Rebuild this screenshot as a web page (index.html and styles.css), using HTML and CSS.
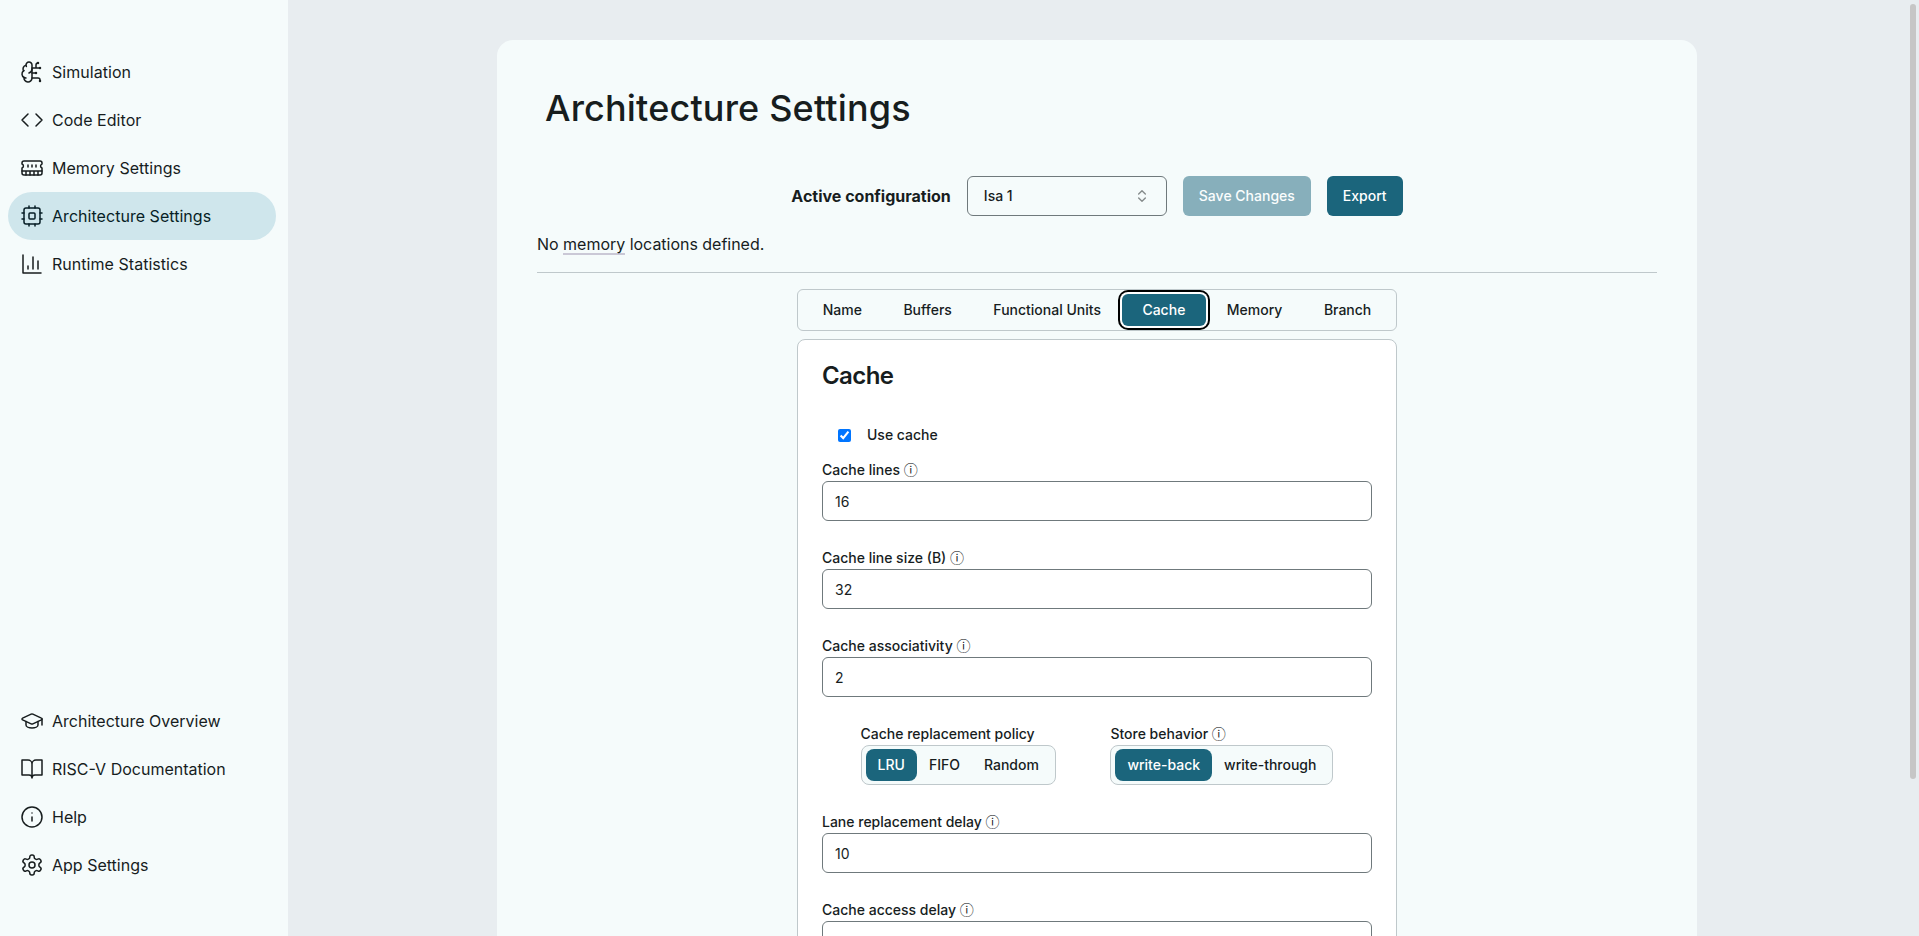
FILE: index.html
```html
<!DOCTYPE html>
<html lang="en">
<head>
<meta charset="utf-8">
<title>Architecture Settings</title>
<link rel="stylesheet" href="styles.css">
</head>
<body>
<div class="app">
  <nav class="sidebar">
    <div class="nav-group">
      <a class="nav-item"><svg class="icon" viewBox="0 0 24 24"><path d="M12 5a3 3 0 1 0-5.997.125 4 4 0 0 0-2.526 5.77 4 4 0 0 0 .556 6.588A4 4 0 1 0 12 18Z"/><path d="M9 13a4.5 4.5 0 0 0 3-4M6.003 5.125A3 3 0 0 0 6.401 6.5M3.477 10.896a4 4 0 0 1 .585-.396M6 18a4 4 0 0 1-1.967-.516M12 13h4M12 18h6a2 2 0 0 1 2 2v1M12 8h8M16 8V5a2 2 0 0 1 2-2"/><circle cx="16" cy="13" r=".5"/><circle cx="18" cy="3" r=".5"/><circle cx="20" cy="21" r=".5"/><circle cx="20" cy="8" r=".5"/></svg>Simulation</a>
      <a class="nav-item"><svg class="icon" viewBox="0 0 24 24"><path d="m16 18 6-6-6-6M8 6l-6 6 6 6"/></svg>Code Editor</a>
      <a class="nav-item"><svg class="icon" viewBox="0 0 24 24"><path d="M6 19v-3M10 19v-3M14 19v-3M18 19v-3M8 11V9M16 11V9M12 11V9M2 15h20"/><path d="M2 7a2 2 0 0 1 2-2h16a2 2 0 0 1 2 2v1.1a2 2 0 0 0 0 3.837V17a2 2 0 0 1-2 2H4a2 2 0 0 1-2-2v-5.1a2 2 0 0 0 0-3.837Z"/></svg>Memory Settings</a>
      <a class="nav-item active"><svg class="icon" viewBox="0 0 24 24"><rect x="4" y="4" width="16" height="16" rx="2"/><rect x="9" y="9" width="6" height="6" rx="1"/><path d="M15 2v2M15 20v2M2 15h2M2 9h2M20 15h2M20 9h2M9 2v2M9 20v2"/></svg>Architecture Settings</a>
      <a class="nav-item"><svg class="icon" viewBox="0 0 24 24"><path d="M3 3v18h18M13 17V5M18 17V9M8 17v-3"/></svg>Runtime Statistics</a>
    </div>
    <div class="nav-group secondary">
      <a class="nav-item"><svg class="icon" viewBox="0 0 24 24"><path d="M21.42 10.922a1 1 0 0 0-.019-1.838L12.83 5.18a2 2 0 0 0-1.66 0L2.6 9.08a1 1 0 0 0 0 1.832l8.57 3.908a2 2 0 0 0 1.66 0z"/><path d="M22 10v6M6 12.5V16a6 3 0 0 0 12 0v-3.5"/></svg>Architecture Overview</a>
      <a class="nav-item"><svg class="icon" viewBox="0 0 24 24"><path d="M2 3h6a4 4 0 0 1 4 4v14a3 3 0 0 0-3-3H2zM22 3h-6a4 4 0 0 0-4 4v14a3 3 0 0 1 3-3h7z"/></svg>RISC-V Documentation</a>
      <a class="nav-item"><svg class="icon" viewBox="0 0 24 24"><circle cx="12" cy="12" r="10"/><path d="M12 16v-4M12 8h.01"/></svg>Help</a>
      <a class="nav-item"><svg class="icon" viewBox="0 0 24 24"><path d="M12.22 2h-.44a2 2 0 0 0-2 2v.18a2 2 0 0 1-1 1.73l-.43.25a2 2 0 0 1-2 0l-.15-.08a2 2 0 0 0-2.73.73l-.22.38a2 2 0 0 0 .73 2.73l.15.1a2 2 0 0 1 1 1.72v.51a2 2 0 0 1-1 1.74l-.15.09a2 2 0 0 0-.73 2.73l.22.38a2 2 0 0 0 2.73.73l.15-.08a2 2 0 0 1 2 0l.43.25a2 2 0 0 1 1 1.73V20a2 2 0 0 0 2 2h.44a2 2 0 0 0 2-2v-.18a2 2 0 0 1 1-1.73l.43-.25a2 2 0 0 1 2 0l.15.08a2 2 0 0 0 2.73-.73l.22-.39a2 2 0 0 0-.73-2.73l-.15-.08a2 2 0 0 1-1-1.74v-.5a2 2 0 0 1 1-1.74l.15-.09a2 2 0 0 0 .73-2.73l-.22-.38a2 2 0 0 0-2.73-.73l-.15.08a2 2 0 0 1-2 0l-.43-.25a2 2 0 0 1-1-1.73V4a2 2 0 0 0-2-2z"/><circle cx="12" cy="12" r="3"/></svg>App Settings</a>
    </div>
  </nav>
  <main class="main">
    <div class="scroll-thumb"></div>
    <section class="page">
      <h1 class="page-title">Architecture Settings</h1>
      <div class="config-row">
        <span class="config-label">Active configuration</span>
        <button class="select">Isa 1<svg class="chevrons" viewBox="0 0 24 24"><path d="m7 15 5 5 5-5M7 9l5-5 5 5"/></svg></button>
        <button class="btn" disabled>Save Changes</button>
        <button class="btn">Export</button>
      </div>
      <p class="notice">No <span class="term">memory</span> locations defined.</p>
      <hr class="divider">
      <div class="tabs">
        <button class="tab">Name</button>
        <button class="tab">Buffers</button>
        <button class="tab">Functional Units</button>
        <button class="tab selected focused">Cache</button>
        <button class="tab">Memory</button>
        <button class="tab">Branch</button>
      </div>
      <div class="panel">
        <h2 class="panel-title">Cache</h2>
        <label class="check-row"><input class="check" type="checkbox" checked>Use cache</label>
        <div class="field"><label class="label">Cache lines <span class="hint">ⓘ</span></label><input class="input" value="16"></div>
        <div class="field"><label class="label">Cache line size (B) <span class="hint">ⓘ</span></label><input class="input" value="32"></div>
        <div class="field"><label class="label">Cache associativity <span class="hint">ⓘ</span></label><input class="input" value="2"></div>
        <div class="choices">
          <div class="choice"><span class="label">Cache replacement policy</span>
            <div class="segment"><button class="option selected">LRU</button><button class="option">FIFO</button><button class="option">Random</button></div></div>
          <div class="choice"><span class="label">Store behavior <span class="hint">ⓘ</span></span>
            <div class="segment"><button class="option selected">write-back</button><button class="option">write-through</button></div></div>
        </div>
        <div class="field"><label class="label">Lane replacement delay <span class="hint">ⓘ</span></label><input class="input" value="10"></div>
        <div class="field"><label class="label">Cache access delay <span class="hint">ⓘ</span></label><input class="input" value="1"></div>
      </div>
    </section>
  </main>
</div>
</body>
</html>
```
FILE: styles.css
```css
* { box-sizing: border-box; }
body { margin: 0; font-family: Inter, sans-serif; font-size: 16px; line-height: 24px; color: #171d1e; }
button, input { font: inherit; color: inherit; margin: 0; }
h1, h2, p { margin: 0; }

.app { display: flex; height: 936px; overflow: hidden; background: #e8edf0; }
.sidebar { width: 288px; flex: none; padding: 48px 12px 47px 8px; background: #f5fbfb; display: flex; flex-direction: column; justify-content: space-between; }
.nav-item { display: flex; align-items: center; gap: 8px; height: 48px; padding-left: 12px; border-radius: 24px; letter-spacing: 0.04px; }
.secondary .nav-item { letter-spacing: 0; }
.nav-item.active { background: #cfe6ec; color: #071e26; }
.icon { width: 24px; height: 24px; fill: none; stroke: currentColor; stroke-width: 1.5; stroke-linecap: round; stroke-linejoin: round; }

.main { position: relative; flex: 1; min-width: 0; padding: 40px 13px 0 0; overflow: hidden; }
.scroll-thumb { position: absolute; top: 4px; right: 3px; width: 6px; height: 775px; border-radius: 3px; background: #c6c6c6; }
.page { width: 1200px; height: 1100px; margin: 0 auto; padding: 40px; border-radius: 16px; background: #f5fbfb; }
.page-title { padding: 8px 8px; margin-bottom: 40px; font-size: 36px; line-height: 40px; font-weight: 500; letter-spacing: 0.17px; }

.config-row { display: flex; justify-content: center; align-items: center; gap: 16px; }
.config-label { font-weight: 700; }
.select { display: flex; justify-content: space-between; align-items: center; width: 200px; height: 40px; padding: 0 16px; border: 1px solid #6f797c; border-radius: 6px; background: transparent; font-size: 14px; font-weight: 500; }
.chevrons { width: 16px; height: 16px; fill: none; stroke: currentColor; stroke-width: 2; stroke-linecap: round; stroke-linejoin: round; opacity: .5; }
.btn { height: 40px; padding: 0 16px; border: 0; border-radius: 6px; background: #1b657c; color: #fff; font-size: 14px; font-weight: 500; }
.btn:disabled { opacity: .5; }
.notice { margin-top: 16px; letter-spacing: -0.02px; }
.term { border-bottom: 2px solid #cac8d6; line-height: 18px; display: inline-block; }
.divider { height: 1px; margin: 16px 0; border: 0; background: #bfc8cb; }

.tabs { display: flex; width: 600px; height: 42px; margin: 0 auto 8px; padding: 4px; border: 1px solid #bfc8cb; border-radius: 6px; }
.tab { flex: 1 1 auto; height: 32px; padding: 0 12px; border: 0; border-radius: 6px; background: none; font-size: 14px; font-weight: 500; }
.selected { background: #1b657c; color: #fff; }
.focused { box-shadow: 0 0 0 2px #fff, 0 0 0 4px #000; }

.panel { width: 600px; height: 800px; margin: 0 auto; padding: 24px; border: 1px solid #bfc8cb; border-radius: 8px; background: #fff; }
.panel-title { font-size: 24px; line-height: 24px; font-weight: 600; letter-spacing: -0.6px; }
.check-row { display: flex; align-items: center; gap: 16px; height: 14px; margin: 40px 0 21px 16px; font-size: 14px; font-weight: 500; }
.check { width: 13px; height: 13px; }
.field { display: flex; flex-direction: column; gap: 4px; height: 88px; }
.label { font-size: 14px; line-height: 14px; height: 14px; font-weight: 500; white-space: nowrap; }
.hint { font-family: "Noto Sans CJK JP", sans-serif; font-weight: 400; line-height: 0; }
.input { width: 100%; height: 40px; padding: 0 12px; border: 1px solid #6f797c; border-radius: 6px; background: transparent; font-size: 14px; }
.choices { display: flex; justify-content: space-evenly; gap: 16px; height: 88px; }
.choice { display: flex; flex-direction: column; align-items: flex-start; gap: 4px; }
.segment { display: flex; align-items: center; height: 40px; padding: 0 4px; border: 1px solid #bfc8cb; border-radius: 8px; background: #f5fbfb; }
.option { height: 32px; padding: 0 12px; border: 0; border-radius: 6px; background: none; font-size: 14px; font-weight: 500; }
.option.selected { border-radius: 8px; background: #1b657c; }
```
